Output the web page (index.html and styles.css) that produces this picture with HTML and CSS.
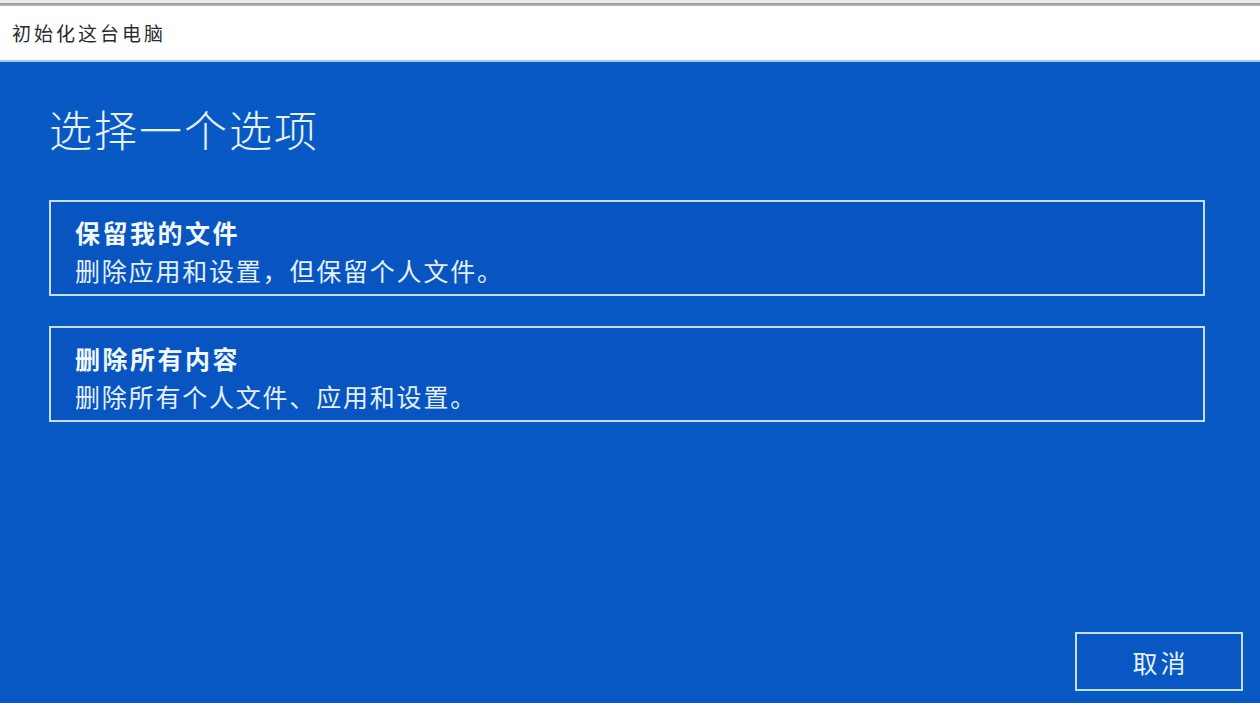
FILE: index.html
```html
<!DOCTYPE html>
<html lang="zh-CN">
<head>
<meta charset="utf-8">
<title>初始化这台电脑</title>
<link rel="stylesheet" href="styles.css">
</head>
<body>
<div class="window">
  <div class="topstrip"></div>
  <header class="titlebar">
    <span class="title">初始化这台电脑</span>
  </header>
  <main class="panel">
    <h1 class="heading">选择一个选项</h1>
    <div class="options">
      <div class="option">
        <div class="opt-title">保留我的文件</div>
        <div class="opt-desc">删除应用和设置，但保留个人文件。</div>
      </div>
      <div class="option">
        <div class="opt-title">删除所有内容</div>
        <div class="opt-desc">删除所有个人文件、应用和设置。</div>
      </div>
    </div>
    <button class="cancel">取消</button>
  </main>
</div>
</body>
</html>
```

FILE: styles.css
```css
html, body {
  margin: 0;
  padding: 0;
  height: 100%;
  background: #0959c5;
}
body {
  font-family: "Noto Sans CJK SC", "Noto Sans", sans-serif;
}
.window {
  display: flex;
  flex-direction: column;
  height: 703px;
  overflow: hidden;
}
.topstrip {
  height: 6px;
  background: linear-gradient(#ececec 0, #ececec 3px, #9a9a9a 3px, #b8b8b8 6px);
}
.titlebar {
  height: 56px;
  background: #ffffff;
  display: flex;
  align-items: center;
  padding-left: 12px;
  border-bottom: 2px solid #9cc8f2;
  box-sizing: border-box;
}
.title {
  font-size: 19px;
  letter-spacing: 3px;
  color: #2a2a2a;
  margin-top: -2px;
}
.panel {
  flex: 1;
  display: flex;
  flex-direction: column;
  padding: 36px 17px 12px 49px;
  background: #0959c5;
  color: #eaf4ff;
}
.heading {
  margin: 0;
  font-size: 43px;
  font-weight: 300;
  line-height: 60px;
  letter-spacing: 2px;
  color: #e6f2ff;
}
.options {
  display: flex;
  flex-direction: column;
  gap: 30px;
  margin-top: 42px;
  margin-right: 38px;
}
.option {
  height: 96px;
  box-sizing: border-box;
  border: 2px solid #c4e0ff;
  background: #0855c1;
  padding: 12px 24px 0 24px;
}
.opt-title {
  font-size: 25px;
  font-weight: 700;
  line-height: 36px;
  letter-spacing: 2.5px;
  color: #f2f8ff;
}
.opt-desc {
  font-size: 25px;
  line-height: 40px;
  letter-spacing: 1.8px;
  color: #e4f0ff;
}
.cancel {
  margin-top: auto;
  align-self: flex-end;
  width: 168px;
  height: 59px;
  box-sizing: border-box;
  border: 2px solid #c4e0ff;
  background: #0957c2;
  color: #e4f0ff;
  font-family: "Noto Sans CJK SC", "Noto Sans", sans-serif;
  font-size: 25px;
  letter-spacing: 3px;
  padding: 0 0 0 3px;
}
```
